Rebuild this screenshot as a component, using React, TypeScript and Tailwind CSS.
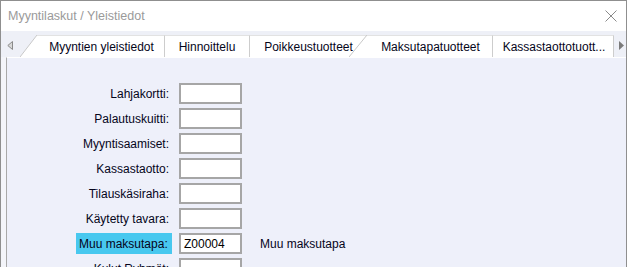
import React from "react";

const rows: { label: string; value?: string; desc?: string; active?: boolean }[] = [
  { label: "Lahjakortti:" },
  { label: "Palautuskuitti:" },
  { label: "Myyntisaamiset:" },
  { label: "Kassastaotto:" },
  { label: "Tilauskäsiraha:" },
  { label: "Käytetty tavara:" },
  { label: "Muu maksutapa:", value: "Z00004", desc: "Muu maksutapa", active: true },
  { label: "Kulut Ryhmät:" },
];

export default function App() {
  return (
    <div className="w-[627px] h-[267px] overflow-hidden border border-[#8f8f8f] border-b-0 bg-white font-['Liberation_Sans',Arial,sans-serif] text-[12px] text-[#05051a]">
      {/* title bar */}
      <div className="h-[30px] flex items-center justify-between pl-[7px] pr-[9px]">
        <span className="text-[12.5px] text-[#9a9a9a]">Myyntilaskut / Yleistiedot</span>
        <svg width="12" height="12" viewBox="0 0 12 12">
          <path d="M0.5 0.5 L11.5 11.5 M11.5 0.5 L0.5 11.5" stroke="#8a8a8a" strokeWidth="1" fill="none" />
        </svg>
      </div>
      {/* tab strip */}
      <div className="h-[26px] bg-[#eef0f7] flex items-end">
        <div className="w-[19px] h-full flex items-center pl-[6px] pt-[3px]">
          <svg width="6" height="9" viewBox="0 0 6 9">
            <path d="M5.5 0.5 L0.8 4.5 L5.5 8.5 Z" fill="#d8d8d8" stroke="#8a8a8a" strokeWidth="1" />
          </svg>
        </div>
        <svg width="17" height="22" viewBox="0 0 17 22" className="block">
          <polygon points="0,22 17,0 17,22" fill="#ffffff" />
          <line x1="0" y1="22" x2="17" y2="0" stroke="#c8c8c8" strokeWidth="1" />
        </svg>
        <div className="w-[128px] h-[22px] bg-white border-t border-[#e2e2e2] border-r border-r-[#cdcdcd] flex items-center justify-center pl-[2px]">
          Myyntien yleistiedot
        </div>
        <div className="w-[85px] h-[22px] bg-white border-t border-[#e2e2e2] border-r border-r-[#cdcdcd] flex items-center justify-center">
          Hinnoittelu
        </div>
        <div className="relative w-[117px] h-[22px] bg-white border-t border-[#e2e2e2] flex items-center justify-center">
          Poikkeustuotteet
          <svg width="18" height="22" viewBox="0 0 18 22" className="absolute right-0 top-[-1px]">
            <line x1="0" y1="22" x2="18" y2="0" stroke="#c8c8c8" strokeWidth="1" />
          </svg>
        </div>
        <div className="w-[126px] h-[22px] bg-white border-t border-[#e2e2e2] border-r border-r-[#cdcdcd] flex items-center justify-center pl-[2px]">
          Maksutapatuotteet
        </div>
        <div className="w-[121px] h-[22px] bg-white border-t border-[#e2e2e2] border-r border-r-[#cdcdcd] flex items-center justify-center pl-[2px]">
          Kassastaottotuott...
        </div>
        <div className="flex-1 h-full flex items-center pl-[5px] pt-[3px]">
          <svg width="5" height="9" viewBox="0 0 5 9">
            <path d="M0 0 L5 4.5 L0 9 Z" fill="#7a7a7a" />
          </svg>
        </div>
      </div>
      {/* content */}
      <div className="h-[210px] bg-[#f4f5fa] pl-[5px]">
        <div className="h-full bg-[#eef0fa] border-l border-[#a9a9a9] border-t border-t-white pt-[25px] flex flex-col gap-[4px]">
          {rows.map((r) => (
            <div key={r.label} className="flex items-center h-[21px] shrink-0">
              <div className="w-[165px] flex justify-end">
                <span
                  className={
                    "h-[21px] flex items-center pl-[3px] pr-[3px] " +
                    (r.active ? "bg-[#48c8ef] w-[96px]" : "")
                  }
                >
                  {r.label}
                </span>
              </div>
              <div className="ml-[7px] w-[63px] h-[21px] bg-white border-2 border-[#a6a6a6] flex items-center pl-[3px] text-black">
                {r.value ?? ""}
              </div>
              {r.desc && <span className="ml-[18px]">{r.desc}</span>}
            </div>
          ))}
        </div>
      </div>
    </div>
  );
}
